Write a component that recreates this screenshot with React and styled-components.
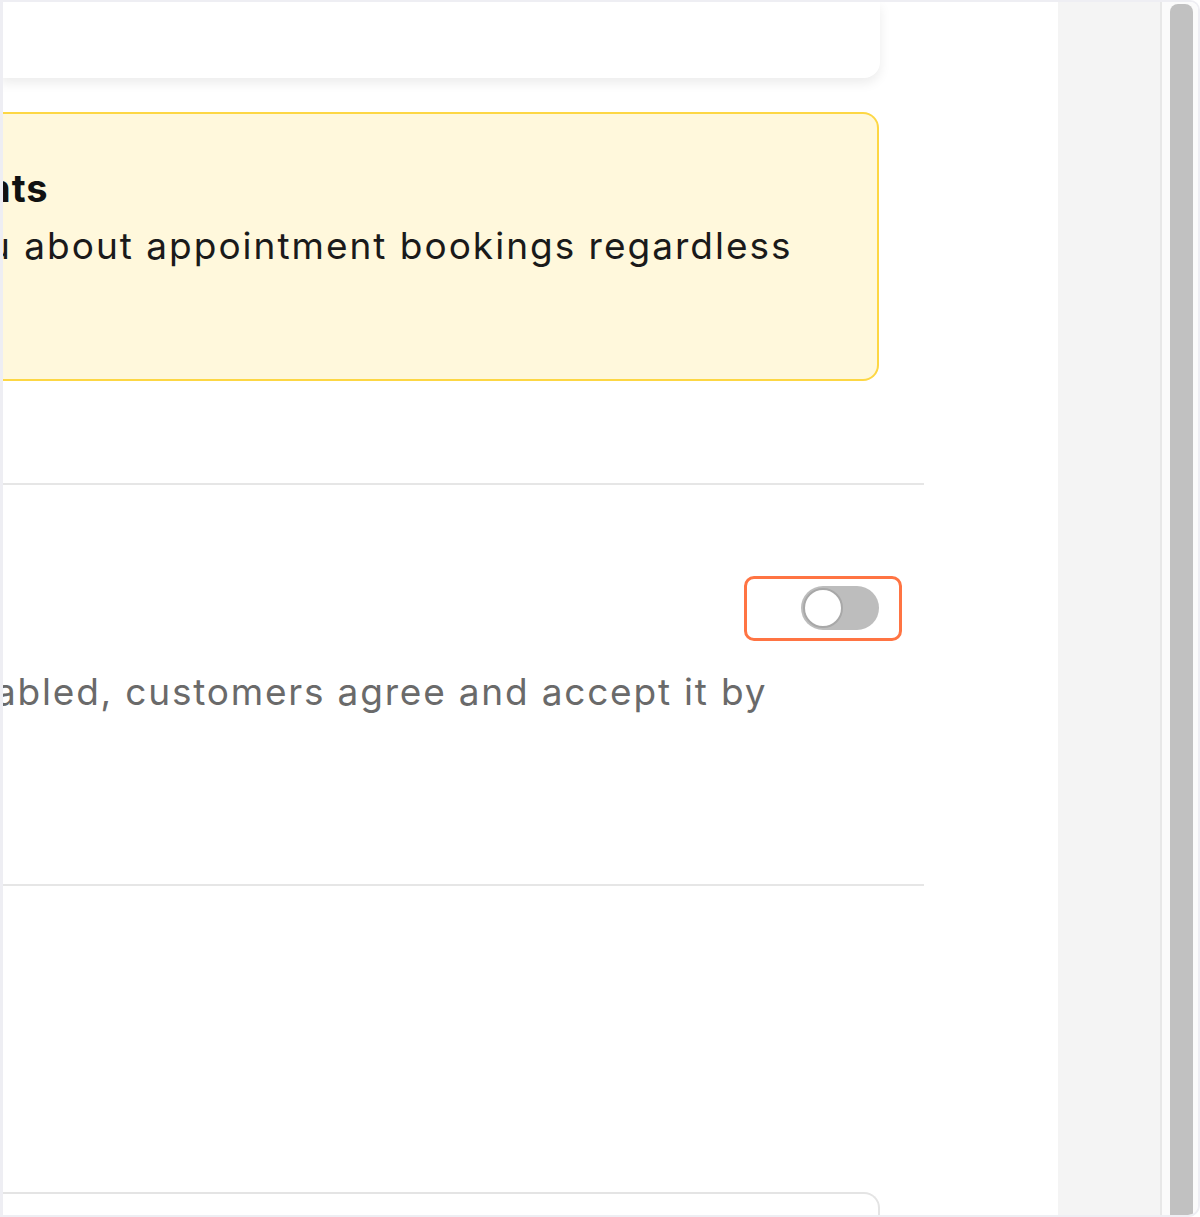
import React from 'react';
import styled, { createGlobalStyle } from 'styled-components';

const GlobalStyle = createGlobalStyle`
    html, body {
        margin:0;
        padding:0;
        background:#ffffff;
    }
    body {
        font-family:"Inter", "Noto Sans", sans-serif;
    }
`

function App() {
    return (
        <>
            <GlobalStyle />
            <Frame>
                <Main>
                    <Column>
                        <TopCard />
                        <Notice>
                            <NoticeTitle shift={-13}>nts</NoticeTitle>
                            <NoticeText shift={-12}>u about appointment bookings regardless</NoticeText>
                        </Notice>
                        <Divider gap={102} />
                        <SettingRow>
                            <SettingHead>
                                <Highlight>
                                    <Switch aria-label="toggle" role="switch" aria-checked="false">
                                        <Knob />
                                    </Switch>
                                </Highlight>
                            </SettingHead>
                            <SettingText shift={-5}>abled, customers agree and accept it by</SettingText>
                        </SettingRow>
                        <Divider gap={0} />
                        <BottomCard />
                    </Column>
                </Main>
                <Aside />
                <ScrollTrack>
                    <Thumb />
                </ScrollTrack>
            </Frame>
        </>
    )
}

export default App;

const Frame = styled.div`
    width:1200px;
    height:1217px;
    box-sizing:border-box;
    border:2px solid #eeeef3;
    border-left-width:3px;
    border-radius:0 10px 12px 0;
    display:flex;
    overflow:hidden;
    background:#ffffff;
`

const Main = styled.div`
    width:1055px;
    flex-shrink:0;
    background:#ffffff;
    overflow:hidden;
`

const Column = styled.div`
    width:924px;
    margin-left:-3px;
    display:flex;
    flex-direction:column;
`

const TopCard = styled.div`
    height:76px;
    width:880px;
    flex-shrink:0;
    background:#ffffff;
    border-radius:0 0 16px 0;
    box-shadow:0 5px 12px rgba(0,0,0,0.08);
`

const Notice = styled.div`
    margin-top:34px;
    width:879px;
    height:269px;
    flex-shrink:0;
    box-sizing:border-box;
    background:#fff8dc;
    border:2px solid #fdd744;
    border-left:none;
    border-radius:0 16px 16px 0;
    padding-top:52px;
`

const NoticeTitle = styled.div`
    margin-left:${p => p.shift}px;
    font-size:38px;
    font-weight:700;
    color:#111111;
    line-height:44px;
    letter-spacing:1px;
`

const NoticeText = styled.div`
    margin-left:${p => p.shift}px;
    margin-top:14px;
    font-size:37px;
    font-weight:400;
    color:#1a1a1a;
    line-height:44px;
    letter-spacing:2px;
    white-space:nowrap;
`

const Divider = styled.div`
    margin-top:${p => p.gap}px;
    height:2px;
    background:#e6e6e6;
    flex-shrink:0;
`

const SettingRow = styled.div`
    height:399px;
    flex-shrink:0;
    padding-top:91px;
    box-sizing:border-box;
    display:flex;
    flex-direction:column;
`

const SettingHead = styled.div`
    display:flex;
    justify-content:flex-end;
    width:902px;
`

const Highlight = styled.div`
    border:3px solid #ff7443;
    border-radius:10px;
    padding:7px 20px 8px 54px;
    display:flex;
    align-items:center;
`

const Switch = styled.div`
    width:78px;
    height:44px;
    border-radius:22px;
    background:#bdbdbd;
    display:flex;
    align-items:center;
    padding-left:2px;
    box-sizing:border-box;
`

const Knob = styled.div`
    width:40px;
    height:40px;
    border-radius:50%;
    background:#ffffff;
    box-sizing:border-box;
    border:2px solid #a8a8a8;
`

const SettingText = styled.div`
    margin-left:${p => p.shift}px;
    margin-top:29px;
    font-size:37px;
    color:#6a6a6a;
    line-height:44px;
    letter-spacing:1.8px;
    white-space:nowrap;
`

const BottomCard = styled.div`
    margin-top:306px;
    width:880px;
    height:60px;
    flex-shrink:0;
    box-sizing:border-box;
    border-top:2px solid #e4e4e4;
    border-right:2px solid #e4e4e4;
    border-radius:0 16px 0 0;
    background:#ffffff;
`

const Aside = styled.div`
    width:102px;
    flex-shrink:0;
    background:#f4f4f4;
    border-right:2px solid #e8e8e8;
`

const ScrollTrack = styled.div`
    flex:1;
    background:#fbfbfb;
    padding:2px 5px 0 8px;
    display:flex;
`

const Thumb = styled.div`
    flex:1;
    background:#c1c1c1;
    border-radius:8px 8px 0 0;
`
